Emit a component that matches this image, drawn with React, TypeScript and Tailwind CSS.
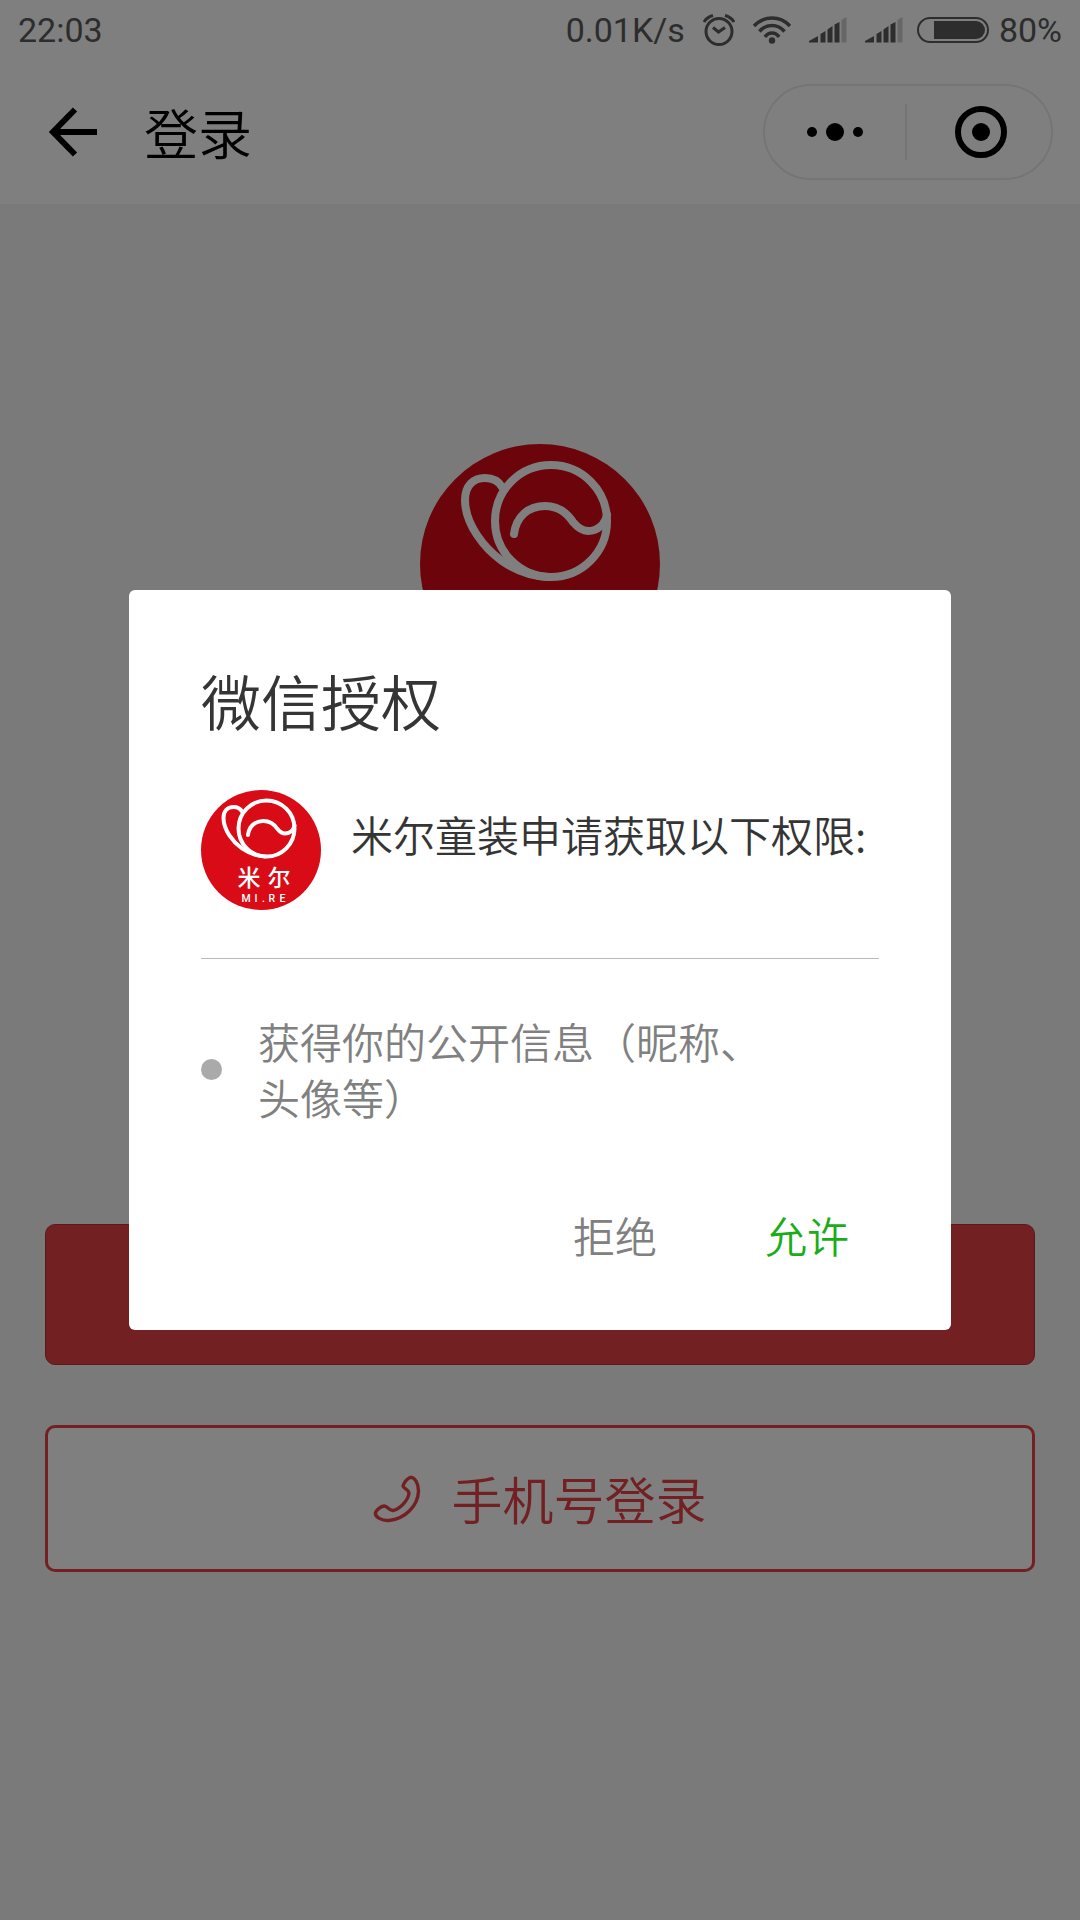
import React from "react";

function BrandLogo({ className }: { className: string }) {
  return (
    <svg viewBox="0 0 240 240" className={className} role="img" aria-label="米尔">
      <circle cx="120" cy="120" r="120" fill="#d80b17" />
      <g fill="none" stroke="#fff" strokeWidth="8" strokeLinecap="round">
        <circle cx="131" cy="77" r="56" />
        <path d="M82 43C78 36 72 34 65 34C53 34 45 42 45 56C45 80 64 104 82 117C95 126 110 132 128 133" />
        <path d="M94 90C96 73 108 62 125 62C138 62 147 69 153 78C158 84 162 87 168 87C178 87 185 80 187 71" />
      </g>
      <g fill="#fff">
        <text x="73 133" y="192" fontSize="46" fontWeight="500" fontFamily="'Noto Sans CJK SC', sans-serif">米尔</text>
        <text x="81 107 122 135 157" y="224" fontSize="21" fontWeight="500" fontFamily="Roboto, sans-serif">MI.RE</text>
      </g>
    </svg>
  );
}

function AlarmIcon() {
  return (
    <svg width="32" height="32" viewBox="0 0 32 32" fill="none" stroke="currentColor" strokeWidth="3" aria-hidden="true">
      <circle cx="16" cy="17.500" r="13" />
      <path d="M10 13.500L15.500 18L22 13.500" />
      <path d="M1 8Q4 3 10 1.500M31 8Q28 3 22 1.500" />
    </svg>
  );
}

function WifiIcon() {
  return (
    <svg width="38" height="28" viewBox="0 0 38 28" fill="none" stroke="currentColor" strokeWidth="3.600" aria-hidden="true">
      <path d="M1 10Q8.500 2 19 2T37 10" />
      <path d="M6.500 15.500Q11.500 9.500 19 9.500T31.500 15.500" />
      <path d="M12 21Q14.500 17 19 17T26 21" />
      <circle cx="19" cy="24.500" r="3.200" fill="currentColor" stroke="none" />
    </svg>
  );
}

function SignalIcon() {
  return (
    <svg width="38" height="26" viewBox="0 0 38 26" fill="currentColor" aria-hidden="true">
      <path d="M0 25.500V24L9 19V25.500ZM11.500 25.500V17L16.500 14V25.500ZM18.500 25.500V12.500L23.500 9V25.500ZM25.500 25.500V7.500L30.500 5V25.500Z" />
      <path d="M32.500 25.500V3L37.500 0V25.500Z" opacity="0.300" />
    </svg>
  );
}

function BatteryIcon() {
  return (
    <svg width="72" height="26" viewBox="0 0 72 26" aria-hidden="true">
      <rect x="1" y="1" width="70" height="24" rx="12" fill="none" stroke="currentColor" strokeWidth="2" />
      <path d="M17 4H59A9 9 0 0 1 59 22H17Z" fill="currentColor" />
    </svg>
  );
}

function StatusBar() {
  return (
    <div className="flex h-[60px] items-center justify-between px-[18px] font-[Roboto,sans-serif] text-[34px] leading-[40px] font-normal text-[#5a5a5a]">
      <span>22:03</span>
      <div className="flex items-center gap-[14px]">
        <div className="flex items-center gap-[18px]">
          <span>0.01K/s</span>
          <AlarmIcon />
          <WifiIcon />
          <SignalIcon />
          <SignalIcon />
        </div>
        <div className="flex items-center gap-[10px]">
          <BatteryIcon />
          <span>80%</span>
        </div>
      </div>
    </div>
  );
}

function TitleBar() {
  return (
    <header className="flex h-36 items-center pr-[27px] pl-12 text-black">
      <button type="button" aria-label="返回">
        <svg width="50" height="50" viewBox="0 0 50 50" fill="none" stroke="currentColor" strokeWidth="6" aria-hidden="true">
          <path d="M27 2.500L5 25L27 47.500M4 25H49" />
        </svg>
      </button>
      <h1 className="ml-[46px] text-[54px] leading-[72px]">登录</h1>
      <div className="ml-auto flex h-24 w-[290px] items-center rounded-full border-2 border-[#eaeaea]">
        <button type="button" aria-label="更多" className="flex flex-1 items-center justify-center gap-[9px]">
          <span className="size-[10px] rounded-full bg-black" />
          <span className="size-[18px] rounded-full bg-black" />
          <span className="size-[10px] rounded-full bg-black" />
        </button>
        <span className="h-14 w-[2px] bg-[#eaeaea]" />
        <button type="button" aria-label="关闭" className="flex flex-1 justify-center pl-1">
          <span className="flex size-[52px] items-center justify-center rounded-full border-6 border-black">
            <span className="size-[18px] rounded-full bg-black" />
          </span>
        </button>
      </div>
    </header>
  );
}

function PhoneIcon() {
  return (
    <svg width="48" height="48" viewBox="0 0 48 48" fill="none" stroke="currentColor" strokeWidth="3.400" strokeLinejoin="round" aria-hidden="true">
      <path d="M37 2.500C34 4 31 8 30 11C30.500 14 35.500 14 36 18C35.500 25 27 34 20 35.500C16 36 14.500 31 11.500 31C8 31 4 34.500 2.500 37.500C1.500 42 9 46 16 45.500C32 44 45 31 45.500 16C45.500 9 42 1.500 37 2.500Z" />
    </svg>
  );
}

function AuthDialog() {
  return (
    <div className="fixed inset-0 flex items-center justify-center bg-black/50">
      <section
        role="dialog"
        aria-modal="true"
        aria-labelledby="auth-title"
        className="w-full max-w-[822px] rounded-md bg-white px-[72px] pt-[72px] pb-[53px]"
      >
        <h2 id="auth-title" className="text-[60px] leading-[76px] text-[#353535]">微信授权</h2>
        <div className="mt-[52px] flex items-start border-b border-[#b8b8b8] pb-12">
          <BrandLogo className="size-[120px] shrink-0" />
          <p className="mt-[14px] ml-[30px] text-[42px] leading-[60px] whitespace-nowrap text-[#353535]">米尔童装申请获取以下权限:</p>
        </div>
        <ul className="mt-[54px]">
          <li className="flex items-center pr-[90px] text-[42px] leading-[56px] text-[#808080]">
            <span className="size-[21px] shrink-0 rounded-full bg-[#aaaaaa]" />
            <span className="ml-9">获得你的公开信息（昵称、头像等）</span>
          </li>
        </ul>
        <div className="mt-[68px] flex justify-end gap-[52px] pr-[6px] text-[42px] leading-[60px]">
          <button type="button" className="px-8 py-3 text-[#808080]">拒绝</button>
          <button type="button" className="px-6 py-3 text-[#1aad19]">允许</button>
        </div>
      </section>
    </div>
  );
}

export default function App() {
  return (
    <div className="flex min-h-screen flex-col bg-[#f5f5f5] font-['Noto_Sans_CJK_SC',sans-serif] font-[350]">
      <div className="bg-white">
        <StatusBar />
        <TitleBar />
      </div>
      <main className="flex flex-1 flex-col px-[45px] pt-60">
        <BrandLogo className="size-60 self-center" />
        <button
          type="button"
          aria-label="微信登录"
          className="mt-[540px] h-[141px] rounded-[10px] border border-[#b83236] bg-[#e64044]"
        />
        <button
          type="button"
          className="mt-[60px] flex h-[147px] items-center justify-center gap-[30px] rounded-[10px] border-3 border-[#e64044] bg-white text-[51px] text-[#e64044]"
        >
          <PhoneIcon />
          手机号登录
        </button>
      </main>
      <AuthDialog />
    </div>
  );
}
